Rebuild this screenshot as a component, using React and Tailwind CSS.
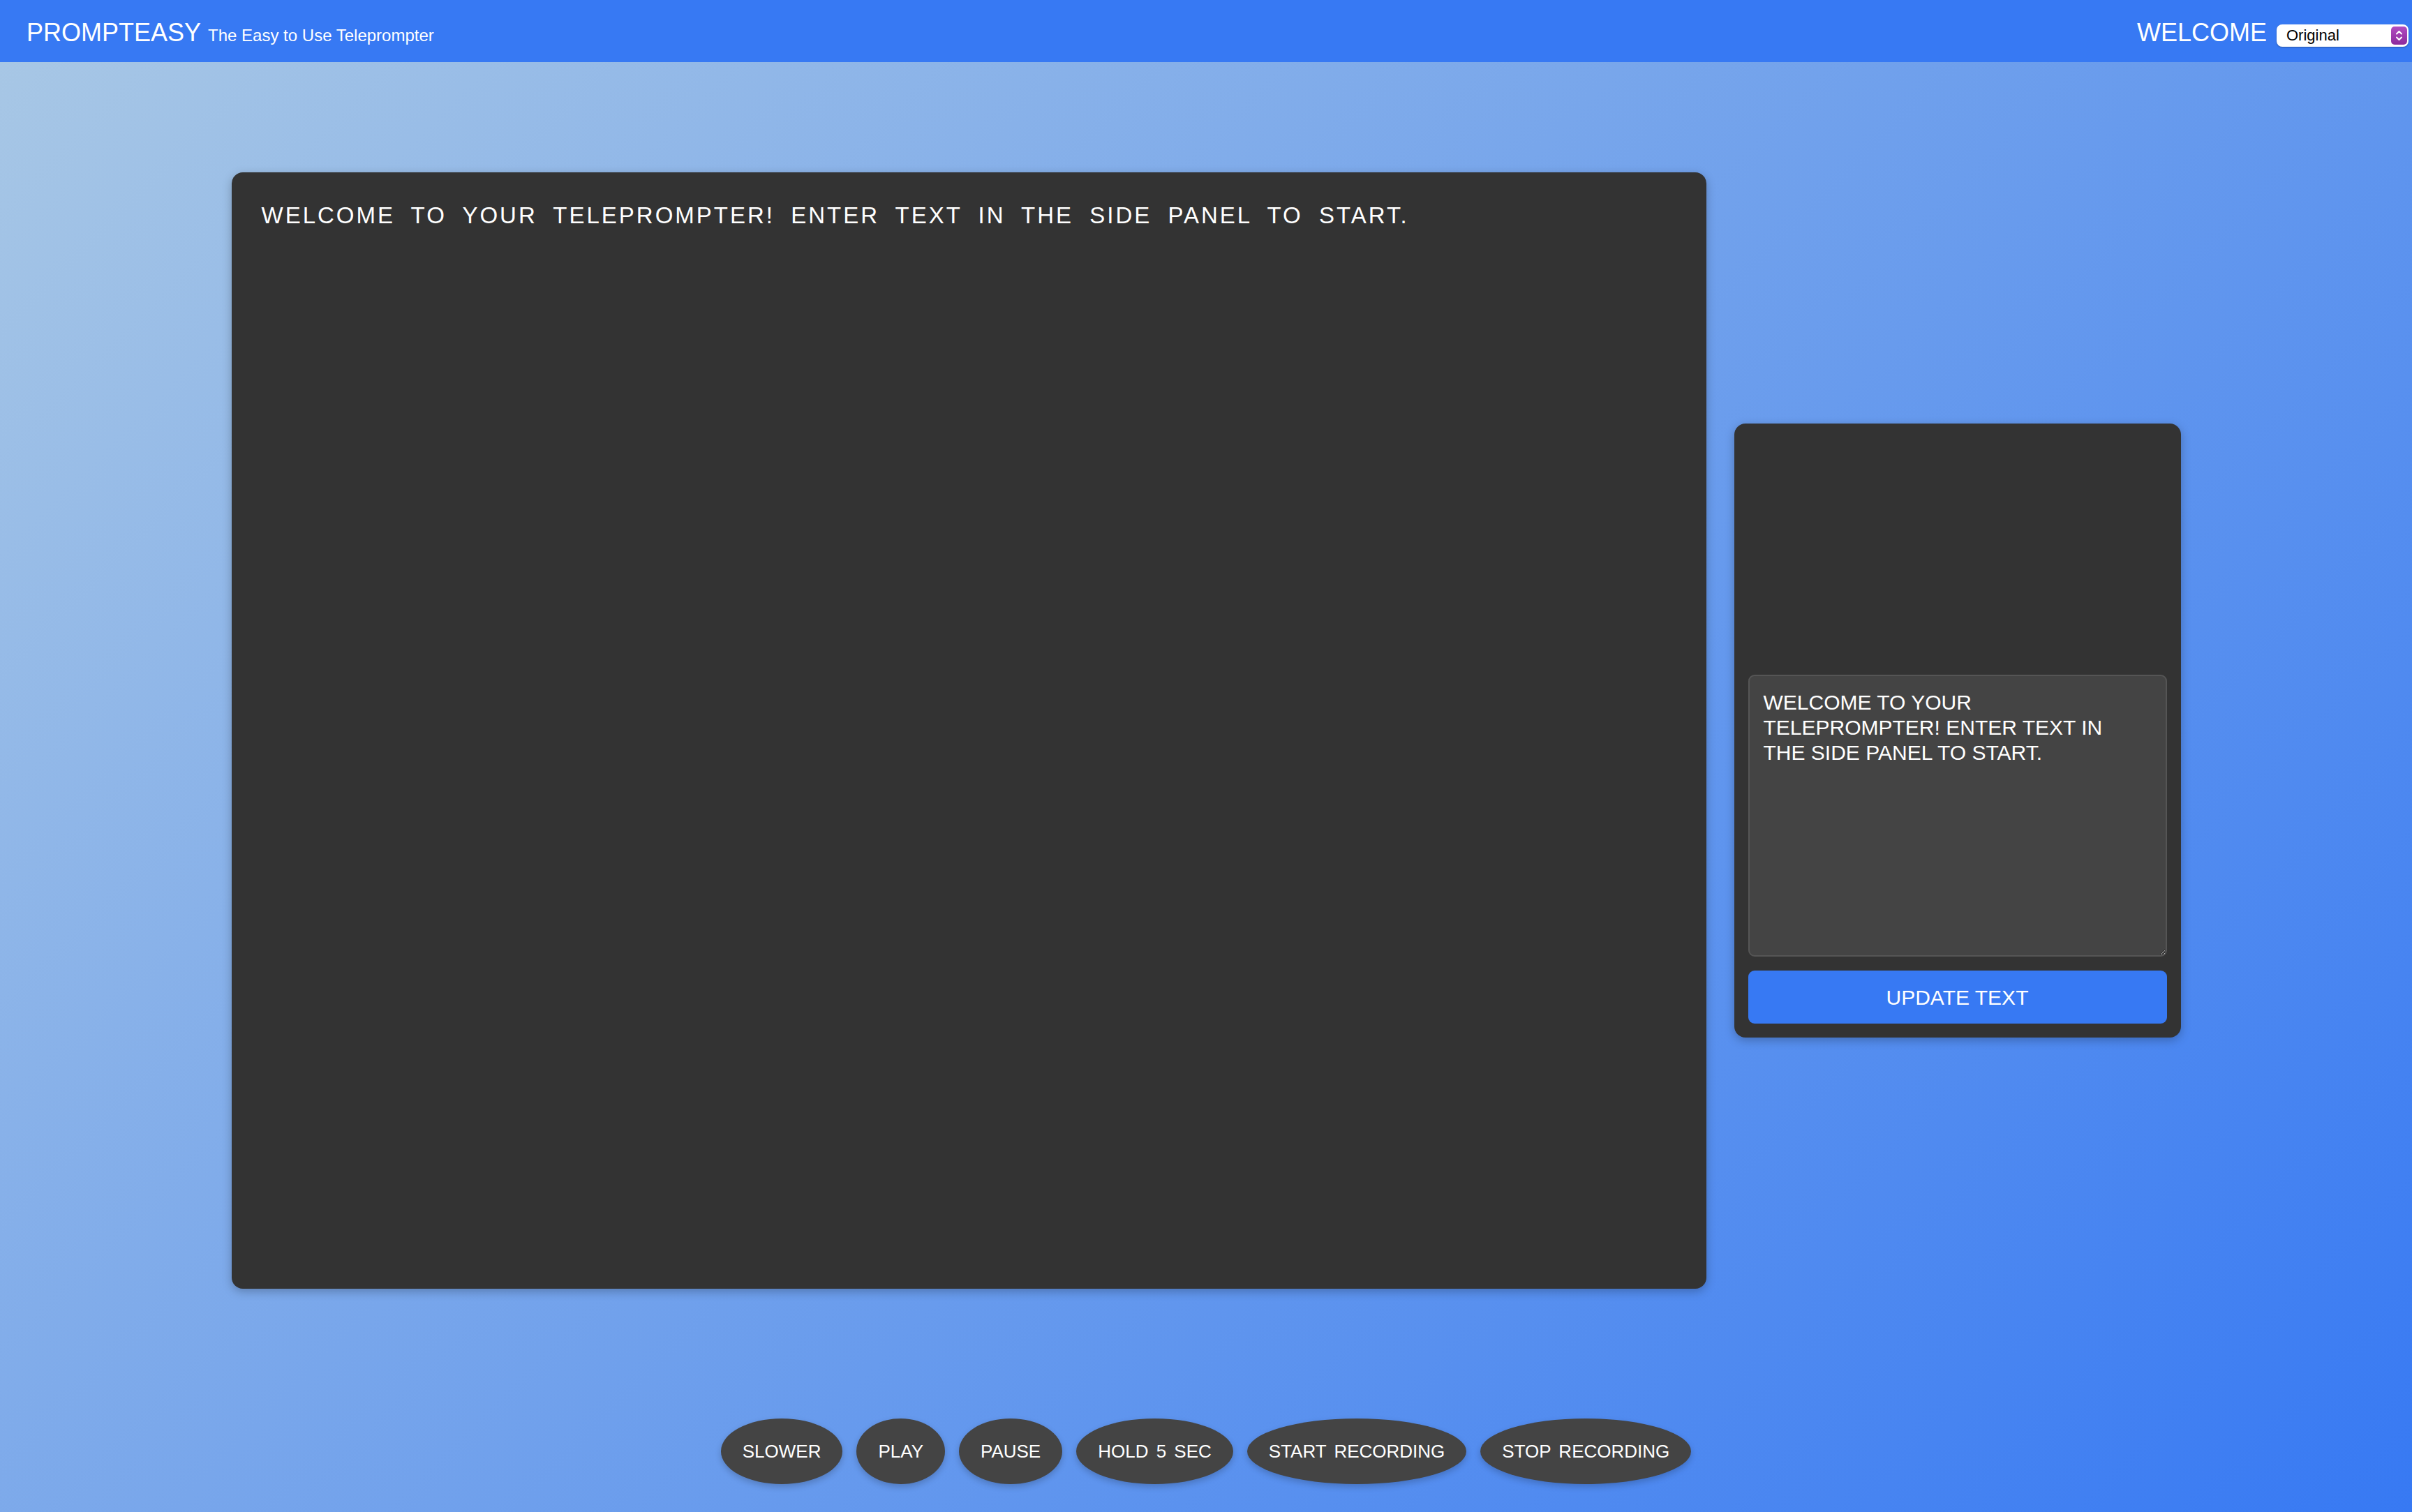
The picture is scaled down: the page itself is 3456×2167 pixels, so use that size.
export default function App() {
  const buttons = ["SLOWER", "PLAY", "PAUSE", "HOLD 5 SEC", "START RECORDING", "STOP RECORDING"];
  return (
    <div className="h-screen w-full flex flex-col overflow-hidden bg-[linear-gradient(135deg,#a9c8e5,#3779f3)] [font-family:'Liberation_Sans',Arial,sans-serif] text-white">
      <header className="h-[89px] shrink-0 bg-[#3779f3] flex items-start justify-between pl-[38px] pr-[5px]">
        <div className="flex items-baseline pt-[29px]">
          <span className="text-[36px] leading-none">PROMPTEASY</span>
          <span className="ml-[10px] text-[24px] leading-none">The Easy to Use Teleprompter</span>
        </div>
        <div className="flex items-start gap-[14px] pt-[29px]">
          <span className="text-[36px] leading-none">WELCOME</span>
          <div className="mt-[6px] w-[189px] h-[32px] rounded-[8px] bg-white flex items-center justify-between pl-[14px] pr-[2px] shadow-[0_1px_2px_rgba(0,0,0,0.3)]">
            <span className="text-[22px] text-black leading-none">Original</span>
            <div className="w-[23px] h-[26px] rounded-[5px] bg-[linear-gradient(#b24cc1,#8c2a9d)] flex items-center justify-center">
              <svg width="23" height="26" viewBox="0 0 23 26" fill="none" stroke="white" strokeWidth="2" strokeLinecap="round" strokeLinejoin="round">
                <path d="M8 10.5 L11.5 7 L15 10.5" />
                <path d="M8 15.5 L11.5 19 L15 15.5" />
              </svg>
            </div>
          </div>
        </div>
      </header>
      <main className="flex-1 flex flex-col items-center pt-[158px]">
        <div className="flex items-center gap-10">
          <div className="w-[2113px] h-[1600px] bg-[#333333] rounded-[16px] shadow-[0_4px_14px_rgba(0,0,0,0.25)] pt-10 pl-[43px] pr-10">
            <p className="text-[33px] leading-[44px] tracking-[3px] [word-spacing:11px]">
              WELCOME TO YOUR TELEPROMPTER! ENTER TEXT IN THE SIDE PANEL TO START.
            </p>
          </div>
          <div className="w-[640px] bg-[#333333] rounded-[16px] p-5 flex flex-col gap-5 shadow-[0_4px_14px_rgba(0,0,0,0.25)]">
            <div className="h-[320px]" />
            <textarea
              readOnly
              defaultValue="WELCOME TO YOUR TELEPROMPTER! ENTER TEXT IN THE SIDE PANEL TO START."
              className="h-[404px] w-full resize-y rounded-[9px] border-2 border-[#555555] bg-[#444444] pl-5 pr-6 pt-5 pb-5 text-[30px] leading-[36px] text-white outline-none"
            />
            <button className="h-[76px] w-full rounded-[9px] bg-[#3779f3] text-[30px] text-white">
              UPDATE TEXT
            </button>
          </div>
        </div>
        <div className="mt-[186px] flex items-center gap-5">
          {buttons.map((b) => (
            <button
              key={b}
              className="h-[94px] px-[31px] rounded-[50%] bg-[#444444] text-[26px] [word-spacing:4px] text-white whitespace-nowrap shadow-[0_4px_10px_rgba(0,0,0,0.2)]"
            >
              {b}
            </button>
          ))}
        </div>
      </main>
    </div>
  );
}
